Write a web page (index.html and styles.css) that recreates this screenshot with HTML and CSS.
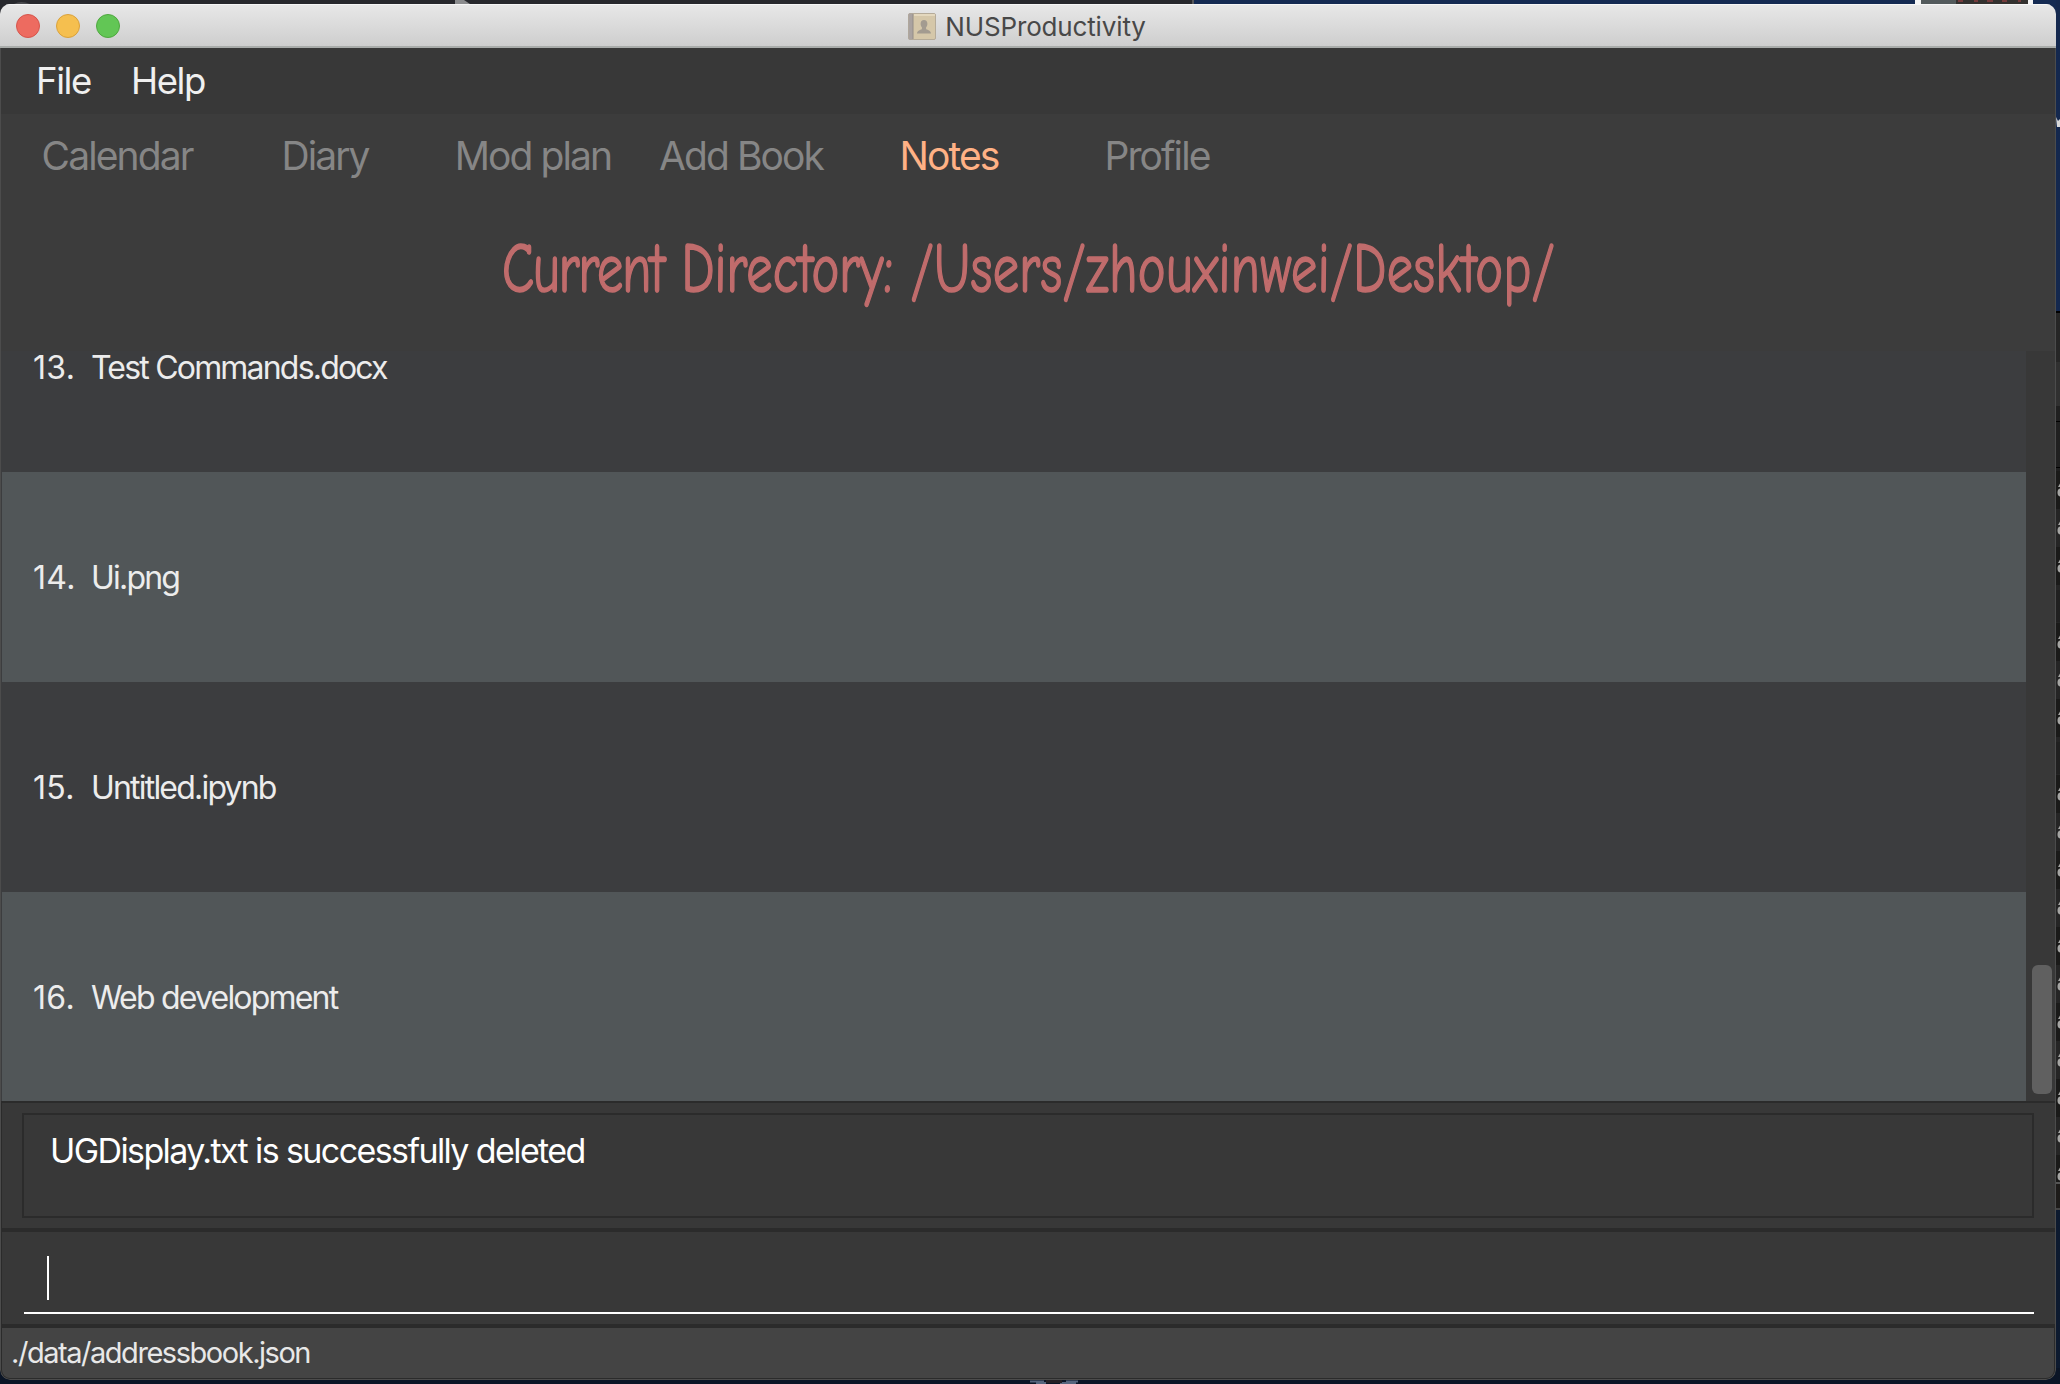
FILE: index.html
```html
<!DOCTYPE html>
<html lang="en">
<head>
<meta charset="utf-8">
<title>NUSProductivity</title>
<link rel="stylesheet" href="styles.css">
</head>
<body>
<div class="desktop">
  <svg class="strip-top" width="2060" height="14" viewBox="0 0 2060 14">
    <rect width="1194" height="14" fill="#27282d"/>
    <rect x="1192" width="2" height="14" fill="#55565a"/>
    <rect x="1194" width="866" height="14" fill="#142a52"/>
    <path d="M455 0h9l6 4h-15z" fill="#8b8c8e"/>
    <path d="M14 4q7-4 16 0z" fill="#4a4b4f"/>
    <rect x="1915" width="118" height="4" fill="#f4f4f4"/>
    <rect x="1921" width="107" height="4" fill="#33312f"/>
    <rect x="1921" width="35" height="4" fill="#535a5c"/>
    <path d="M1958 1h5M1974 1h4M1987 1h6M2002 1h5M2018 1h3" stroke="#743b3c" stroke-width="2"/>
  </svg>
  <div class="window">
    <header class="titlebar">
      <div class="lights">
        <span class="light light-close"></span>
        <span class="light light-min"></span>
        <span class="light light-max"></span>
      </div>
      <svg class="app-icon" width="28" height="27" viewBox="0 0 28 27">
        <rect x="0.5" y="0.5" width="27" height="26" rx="1.5" fill="#d5c7a9" stroke="#b5ab99"/>
        <path d="M0.5 1.5q0-1 1-1H5v26H1.500q-1 0-1-1z" fill="#aaa3a0"/>
        <path d="M5 1v25" stroke="#948d88" stroke-width="1"/>
        <path d="M6 2h21" stroke="#e8dec6" stroke-width="1.500"/>
        <path d="M16 7c2.200 0 3.400 1.600 3.400 3.800 0 1.700-.7 2.800-1.300 3.500v1.600c0 .8 4.900 1 4.900 4.600H9c0-3.600 4.900-3.800 4.900-4.600v-1.600c-.6-.7-1.300-1.800-1.300-3.500C12.600 8.600 13.800 7 16 7z" fill="#a39b90"/>
      </svg>
      <span class="title">NUSProductivity</span>
    </header>
    <div class="content">
      <nav class="menubar"><span>File</span><span>Help</span></nav>
      <nav class="tabs">
        <span class="tab">Calendar</span>
        <span class="tab">Diary</span>
        <span class="tab">Mod plan</span>
        <span class="tab">Add Book</span>
        <span class="tab tab-active">Notes</span>
        <span class="tab">Profile</span>
      </nav>
      <div class="directory"><h1><span class="tight">Current</span> Directory: <span class="path">/Users/zhouxinwei/Desktop/</span></h1></div>
      <main class="files">
        <ul class="list">
          <li><span class="num">13.</span><span class="name">Test Commands.docx</span></li>
          <li class="even"><span class="num">14.</span><span class="name">Ui.png</span></li>
          <li><span class="num">15.</span><span class="name">Untitled.ipynb</span></li>
          <li class="even"><span class="num">16.</span><span class="name">Web development</span></li>
        </ul>
        <div class="scrollbar"><div class="thumb"></div></div>
      </main>
      <section class="result"><div class="result-box">UGDisplay.txt is successfully deleted</div></section>
      <section class="command"><div class="command-field"><span class="caret"></span></div></section>
      <footer class="status">./data/addressbook.json</footer>
    </div>
  </div>
  <svg class="strip-right" width="4" height="1384" viewBox="0 0 4 1384">
    <defs>
      <pattern id="lines" y="471" width="4" height="76" patternUnits="userSpaceOnUse">
        <rect width="4" height="38" fill="#1a1a19"/>
        <rect y="38" width="4" height="38" fill="#252525"/>
        <path d="M4 12.500L2 16h2zM4 17.500Q1.500 18 1.500 21.500T4 25.500zM4 50.500L2 54h2zM4 55.500Q1.500 56 1.500 59.500T4 63.500z" fill="#a5a5a3"/>
      </pattern>
    </defs>
    <rect width="4" height="312" fill="#14284e"/>
    <path d="M0 117l2 4 2-2v8H1z" fill="#d8d8d8"/>
    <rect y="311" width="4" height="2" fill="#000"/>
    <rect y="313" width="4" height="49" fill="#262626"/>
    <rect y="362" width="4" height="44" fill="#303030"/>
    <rect y="406" width="4" height="65" fill="#202020"/>
    <path d="M0 421.500h4M0 467.500h4" stroke="#000"/>
    <rect y="471" width="4" height="712" fill="url(#lines)"/>
    <rect y="590" width="4" height="32" fill="#202020"/>
    <rect y="742" width="4" height="32" fill="#202020"/>
    <rect y="1182" width="4" height="2" fill="#555"/>
    <rect y="1184" width="4" height="24" fill="#1d1b19"/>
    <rect y="1208" width="4" height="2" fill="#444"/>
    <rect y="1210" width="4" height="174" fill="#0d1a2f"/>
  </svg>
  <svg class="strip-bottom" width="2060" height="16" viewBox="0 0 2060 16">
    <rect width="2060" height="16" fill="#0b1526"/>
    <path d="M1030 13.500h14M1066 13.500h12M1036 15h10M1060 15h16" stroke="#56657e" stroke-width="2"/>
    <path d="M1046 13.500h16" stroke="#241f25" stroke-width="3"/>
  </svg>
</div>
</body>
</html>
```
FILE: styles.css
```css
* { box-sizing: border-box; }

body {
  margin: 0;
  font-family: Inter, "Liberation Sans", sans-serif;
  background: #0b1526;
}

.desktop {
  position: relative;
  width: 2060px;
  height: 1384px;
  padding: 4px 4px 4px 0;
  overflow: hidden;
}

/* slivers of the desktop visible behind the window */
.strip-top, .strip-right, .strip-bottom { position: absolute; z-index: 0; }
.strip-top { top: 0; left: 0; }
.strip-right { top: 0; right: 0; }
.strip-bottom { bottom: 0; left: 0; }

.window {
  position: relative;
  z-index: 1;
  display: flex;
  flex-direction: column;
  width: 2056px;
  height: 1376px;
  border-radius: 10px;
  overflow: hidden;
}

.titlebar {
  position: relative;
  display: flex;
  align-items: center;
  justify-content: center;
  gap: 9px;
  height: 44px;
  flex: none;
  padding-right: 2px;
  background: linear-gradient(#e8e8e8, #cecece);
  border-bottom: 2px solid #a9acaa;
  box-shadow: inset 0 1px 0 #f6f6f6;
}

.lights {
  position: absolute;
  left: 16px;
  top: 10px;
  display: flex;
  gap: 16px;
}

.light {
  width: 24px;
  height: 24px;
  border-radius: 50%;
  border: 1px solid;
}
.light-close { background: #ed6b60; border-color: #d5554c; }
.light-min { background: #f5bf4f; border-color: #d9a13c; }
.light-max { background: #62c655; border-color: #4fa73f; }

.app-icon { display: block; margin-top: 2px; }

.title {
  padding-top: 3px;
  font-size: 26px;
  line-height: 39px;
  letter-spacing: -0.15px;
  color: #484848;
}

.content {
  display: flex;
  flex-direction: column;
  flex: 1;
  background: #383838;
  border: 1px solid #4c4c4c;
  border-top: 0;
  border-radius: 0 0 10px 10px;
  overflow: hidden;
}

.menubar {
  display: flex;
  gap: 40px;
  height: 66px;
  flex: none;
  padding-left: 35px;
  font-size: 36.5px;
  line-height: 66px;
  letter-spacing: -1.4px;
  color: #f0f0f0;
}

.tabs {
  display: grid;
  grid-template-columns: repeat(6, 208px);
  height: 84px;
  flex: none;
  padding-left: 12px;
  background: #3c3c3c;
  font-size: 39px;
  line-height: 84px;
  letter-spacing: -1.9px;
  text-align: center;
  color: #868686;
}
.tab-active { color: #ffb185; }

.directory {
  display: flex;
  justify-content: center;
  height: 153px;
  flex: none;
  background: #3c3c3c;
}

.directory h1 {
  margin: 0;
  font-family: "Comic Neue", "Comic Sans MS", cursive;
  font-size: 71px;
  font-weight: 400;
  line-height: 143px;
  white-space: nowrap;
  color: #c06c6c;
  -webkit-text-stroke: 1.6px #c06c6c;
  transform: scaleX(0.74);
}
.tight { letter-spacing: -1.6px; }
.path { letter-spacing: 0.5px; }

.files {
  display: flex;
  height: 750px;
  flex: none;
}

.list {
  display: flex;
  flex-direction: column;
  justify-content: flex-end;
  flex: 1;
  margin: 0;
  padding: 0 0 0 1px;
  list-style: none;
  overflow: hidden;
  background: #3c3d3f;
}

.list li {
  display: flex;
  align-items: center;
  flex: none;
  height: 210px;
  padding: 2px 0 0 31px;
  font-size: 32px;
  line-height: 30px;
  color: #ececec;
}
.list li:last-child { margin-bottom: -1px; }
.list .even { background: #515658; }
.num { width: 58px; letter-spacing: 0.3px; }
.name { letter-spacing: -1.8px; }

.scrollbar {
  display: flex;
  flex-direction: column;
  justify-content: flex-end;
  width: 29px;
  padding: 0 3px 7px 6px;
}
.thumb {
  height: 129px;
  border-radius: 6px;
  background: #606060;
}

.result {
  height: 129px;
  flex: none;
  padding: 10px 21px;
  border: 1px solid #2b2b2b;
  border-width: 2px 0 2px 1px;
  padding-left: 20px;
}

.result-box {
  height: 105px;
  padding: 14px 26px;
  border: 2px solid #2b2b2b;
  font-size: 34px;
  line-height: 43px;
  letter-spacing: -1.6px;
  color: #fff;
}

.command {
  height: 96px;
  flex: none;
  padding: 0 21px 10px 22px;
  border: 1px solid #2b2b2b;
  border-width: 2px 0 2px 1px;
}

.command-field {
  height: 82px;
  padding: 24px 0 0 23px;
  border-bottom: 2px solid #fff;
}

.caret {
  display: block;
  width: 2px;
  height: 44px;
  background: #fff;
}

.status {
  flex: 1;
  padding-left: 9px;
  border: 1px solid #2b2b2b;
  border-top-width: 2px;
  border-radius: 0 0 9px 9px;
  background: #444;
  font-size: 29px;
  line-height: 50px;
  letter-spacing: -1.46px;
  color: #e8e8e8;
}
```
